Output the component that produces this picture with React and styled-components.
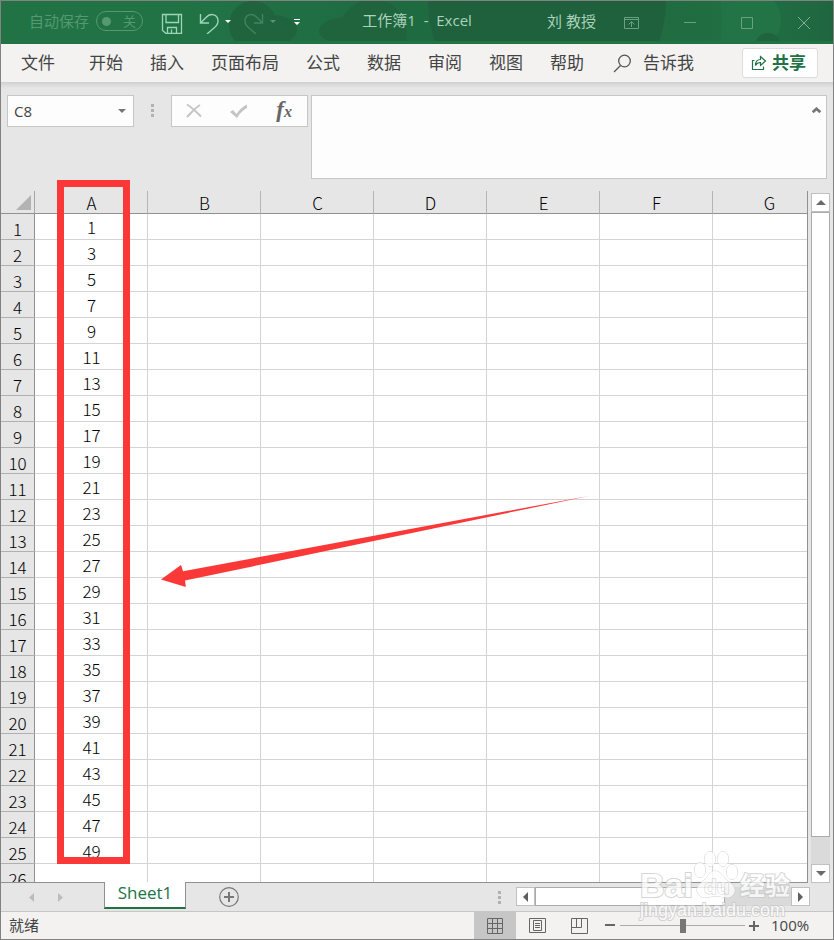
import React, { useState } from 'react';
import styled, { createGlobalStyle } from 'styled-components';

const columns = ['A', 'B', 'C', 'D', 'E', 'F', 'G'];
const rows = Array.from({ length: 26 }, (_, i) => i + 1);
const menuItems = ['文件', '开始', '插入', '页面布局', '公式', '数据', '审阅', '视图', '帮助'];

/* odd numbers fill A1:A25, everything else is empty */
function cellValue(column, row) {
  return column === 'A' && row <= 25 ? row * 2 - 1 : '';
}

function TitleBar() {
  const [autoSave, setAutoSave] = useState(false);

  return (
    <Title>
      <TitleArt viewBox="0 0 832 40" preserveAspectRatio="xMaxYMin slice" aria-hidden="true">
        <defs>
          <linearGradient id="fade" x1="0" x2="1">
            <stop offset="0" stopColor="#1f6a41" stopOpacity="0" />
            <stop offset="0.4" stopColor="#1f6b41" />
            <stop offset="0.8" stopColor="#20693f" />
            <stop offset="1" stopColor="#20693f" stopOpacity="0.5" />
          </linearGradient>
          <linearGradient id="fadeRight" x1="0" x2="1">
            <stop offset="0" stopColor="#1f663f" stopOpacity="0" />
            <stop offset="1" stopColor="#1f663f" />
          </linearGradient>
        </defs>
        <rect x="190" width="530" height="40" fill="url(#fade)" />
        <circle cx="252" cy="24" r="24" fill="#1f643d" />
        <ellipse cx="272" cy="29" rx="24" ry="15" fill="#1f643d" />
        <circle cx="372" cy="32" r="34" fill="#1f643d" />
        <ellipse cx="348" cy="30" rx="30" ry="14" fill="#1f643d" />
        <circle cx="546" cy="0" r="119" fill="#1f613c" />
        <rect x="720" width="112" height="40" fill="url(#fadeRight)" />
        <circle cx="751" cy="19" r="29" fill="#227447" />
        <circle cx="767" cy="45" r="13" fill="#1f643d" />
      </TitleArt>
      <AutoSave>
        自动保存
        <Toggle
          type="button"
          role="switch"
          aria-label="自动保存"
          aria-checked={autoSave}
          onClick={() => setAutoSave(!autoSave)}
        >
          <Knob />
          关
        </Toggle>
      </AutoSave>
      <QuickAccess>
        <IconButton type="button" aria-label="保存">
          <svg width="26" height="22" viewBox="0 0 26 22" fill="none" stroke="#9fd5b7" strokeWidth="1.3">
            <path d="M1.500 2.500h19v19H5l-3.500-3zM5 2.500v8h12.500v-8M6.500 21.500v-6h9v6M10.500 17.500v4" />
          </svg>
        </IconButton>
        <IconButton type="button" aria-label="撤消">
          <svg width="33" height="22" viewBox="0 0 33 22" fill="none" stroke="#9fd5b7" strokeWidth="1.4">
            <path d="M1.500 2v9H10M2 10.500l5-5C12 0 19 3 19 9c0 3-1.500 5-4 7l-7 6" />
            <path d="M26 8h6l-3 3z" fill="#fff" stroke="none" />
          </svg>
        </IconButton>
        <IconButton type="button" aria-label="恢复" disabled>
          <svg width="33" height="22" viewBox="0 0 33 22" fill="none" stroke="#43835f" strokeWidth="1.4">
            <path d="M18.500 2v9H10M18 10.500l-5-5C8 0 1 3 1 9c0 3 1.500 5 4 7l7 6" />
            <path d="M26 8h6l-3 3z" fill="#5b9274" stroke="none" />
          </svg>
        </IconButton>
        <IconButton type="button" aria-label="自定义快速访问工具栏">
          <svg width="12" height="10" viewBox="-6 0 12 10" fill="#fff">
            <path d="M-1 1h6v1h-6zM-1 4h6L2 7z" />
          </svg>
        </IconButton>
      </QuickAccess>
      <Caption>工作簿1&nbsp; -&nbsp; Excel</Caption>
      <User>刘 教授</User>
      <WindowButtons>
        <IconButton type="button" aria-label="功能区显示选项">
          <svg width="15" height="12" viewBox="0 0 15 12" fill="none" stroke="#69a183">
            <path d="M.5.5h14v11H.5zM.5 2.500h14M7.500 10V5M4.500 7.500l3-3 3 3" />
          </svg>
        </IconButton>
        <IconButton type="button" aria-label="最小化">
          <svg width="12" height="12" viewBox="0 0 12 12" stroke="#69a183">
            <path d="M0 5.500h12" />
          </svg>
        </IconButton>
        <IconButton type="button" aria-label="最大化">
          <svg width="12" height="12" viewBox="0 0 12 12" fill="none" stroke="#69a183">
            <path d="M.5.5h11v11H.5z" />
          </svg>
        </IconButton>
        <IconButton type="button" aria-label="关闭">
          <svg width="12" height="12" viewBox="0 0 12 12" stroke="#7db094">
            <path d="M0 0l12 12M12 0L0 12" />
          </svg>
        </IconButton>
      </WindowButtons>
    </Title>
  );
}

function Menu() {
  return (
    <MenuBar>
      {menuItems.map((item) => (
        <MenuItem key={item} type="button">
          {item}
        </MenuItem>
      ))}
      <TellMe type="button">
        <svg width="19" height="20" viewBox="0 0 19 20" fill="none" stroke="#555" strokeWidth="1.3">
          <circle cx="11.500" cy="8" r="5.800" />
          <path d="M7.500 12.500L1 19" />
        </svg>
        告诉我
      </TellMe>
      <Share type="button">
        <svg width="16" height="16" viewBox="0 0 16 16" fill="none" stroke="#217346" strokeWidth="1.2">
          <path d="M3.500 5.500h-2v9h11v-3M4.500 10.500c0-4 2-6 5-6V1.500l5 4.500-5 4.500v-3c-2 0-4 1-5 3z" />
        </svg>
        共享
      </Share>
    </MenuBar>
  );
}

function FormulaBar() {
  return (
    <Formula>
      <NameBox>
        <NameInput aria-label="名称框" defaultValue="C8" />
        <IconButton type="button" aria-label="打开名称框">
          <svg width="8" height="4" viewBox="0 0 8 4" fill="#777">
            <path d="M0 0h8L4 4z" />
          </svg>
        </IconButton>
      </NameBox>
      <Grip />
      <FormulaTools>
        <IconButton type="button" aria-label="取消">
          <svg width="16" height="16" viewBox="0 0 16 16" fill="none" stroke="#c4c4c4" strokeWidth="2">
            <path d="M1 1.500c5 3 9 7 14 12M14 2C9 5 6 9 1 14" />
          </svg>
        </IconButton>
        <IconButton type="button" aria-label="输入">
          <svg width="18" height="15" viewBox="0 0 18 15" fill="#c4c4c4">
            <path d="M0 8l3-2 3.500 4C9 6 12 3 17 .5V4c-4 2-7 5-10 10z" />
          </svg>
        </IconButton>
        <FxButton type="button" aria-label="插入函数">
          f<FxSub>x</FxSub>
        </FxButton>
      </FormulaTools>
      <FormulaField>
        <FormulaInput aria-label="编辑栏" />
        <Collapse type="button" aria-label="折叠编辑栏">
          <svg width="9" height="6" viewBox="0 0 9 6" fill="none" stroke="#777" strokeWidth="2.800">
            <path d="M.7 5.200L4.500 1.800l3.800 3.400" />
          </svg>
        </Collapse>
      </FormulaField>
    </Formula>
  );
}

function Sheet() {
  return (
    <SheetArea>
      <GridView>
        <Grid>
          <colgroup>
            <HeadCol />
            {columns.map((c) => (
              <col key={c} />
            ))}
          </colgroup>
          <thead>
            <tr>
              <Corner>
                <svg width="15" height="15" viewBox="0 0 15 15" fill="#b3b3b3">
                  <path d="M15 0v15H0z" />
                </svg>
              </Corner>
              {columns.map((c) => (
                <ColumnHead key={c} scope="col">
                  {c}
                </ColumnHead>
              ))}
            </tr>
          </thead>
          <tbody>
            {rows.map((r) => (
              <tr key={r}>
                <RowHead scope="row">{r}</RowHead>
                {columns.map((c) => (
                  <Cell key={c}>{cellValue(c, r)}</Cell>
                ))}
              </tr>
            ))}
          </tbody>
        </Grid>
      </GridView>
      <VerticalScroll>
        <ScrollButton type="button" aria-label="向上滚动">
          <svg width="10" height="5" viewBox="0 0 10 5" fill="#6a6a6a">
            <path d="M0 5h10L5 0z" />
          </svg>
        </ScrollButton>
        <VerticalThumb />
        <ScrollButton type="button" aria-label="向下滚动">
          <svg width="10" height="5" viewBox="0 0 10 5" fill="#6a6a6a">
            <path d="M0 0h10L5 5z" />
          </svg>
        </ScrollButton>
      </VerticalScroll>
      <Highlight />
      <Arrow width="430" height="96" viewBox="0 0 430 96" aria-hidden="true">
        <path d="M1 84.500L21 70l2 6.300L430 .7 25 85.500l.8 6.500z" fill="#fb3838" />
      </Arrow>
    </SheetArea>
  );
}

function SheetTabs() {
  return (
    <TabBar>
      <TabNav>
        <IconButton type="button" aria-label="上一个工作表" disabled>
          <svg width="5" height="9" viewBox="0 0 5 9" fill="#bcbcbc">
            <path d="M5 0v9L0 4.500z" />
          </svg>
        </IconButton>
        <IconButton type="button" aria-label="下一个工作表" disabled>
          <svg width="5" height="9" viewBox="0 0 5 9" fill="#bcbcbc">
            <path d="M0 0v9l5-4.500z" />
          </svg>
        </IconButton>
      </TabNav>
      <Tab type="button">Sheet1</Tab>
      <AddSheet type="button" aria-label="新工作表">
        <svg width="20" height="20" viewBox="0 0 20 20" fill="none" stroke="#777">
          <circle cx="10" cy="10" r="9.300" strokeWidth="1.200" />
          <path d="M5 10h10M10 5v10" strokeWidth="2" />
        </svg>
      </AddSheet>
      <TabGrip />
      <HorizontalScroll>
        <ScrollButton type="button" aria-label="向左滚动">
          <svg width="5" height="10" viewBox="0 0 5 10" fill="#5f5f5f">
            <path d="M5 0v10L0 5z" />
          </svg>
        </ScrollButton>
        <HorizontalThumb />
        <ScrollButton type="button" aria-label="向右滚动">
          <svg width="5" height="10" viewBox="0 0 5 10" fill="#5f5f5f">
            <path d="M0 0v10l5-5z" />
          </svg>
        </ScrollButton>
      </HorizontalScroll>
    </TabBar>
  );
}

function StatusBar() {
  const [zoom, setZoom] = useState(100);

  return (
    <Status>
      <StatusText>就绪</StatusText>
      <ViewButtons>
        <ViewButton type="button" aria-label="普通" $active>
          <svg width="16" height="16" viewBox="0 0 16 16" fill="none" stroke="#666">
            <path d="M.5.5h15v15H.5zM5.500.5v15M10.500.5v15M.5 5.500h15M.5 10.500h15" />
          </svg>
        </ViewButton>
        <ViewButton type="button" aria-label="页面布局">
          <svg width="17" height="15" viewBox="0 0 17 15" fill="none" stroke="#666">
            <path d="M.5.5h16v14H.5zM4.500 2.500h8v10h-8zM6 5.500h5M6 7.500h5M6 9.500h5" />
          </svg>
        </ViewButton>
        <ViewButton type="button" aria-label="分页预览">
          <svg width="17" height="16" viewBox="0 0 17 16" fill="none" stroke="#666">
            <path d="M.5.5h16v15H.5zM.5 9.500h10v-9M5.500.5v9" />
          </svg>
        </ViewButton>
      </ViewButtons>
      <ZoomButton type="button" aria-label="缩小" onClick={() => setZoom(Math.max(10, zoom - 10))}>
        <svg width="10" height="10" viewBox="0 0 10 10" fill="#666">
          <path d="M0 3h10v2H0z" />
        </svg>
      </ZoomButton>
      <ZoomRange
        type="range"
        aria-label="显示比例"
        min="0"
        max="200"
        value={zoom}
        onChange={(e) => setZoom(Number(e.target.value))}
      />
      <ZoomButton type="button" aria-label="放大" onClick={() => setZoom(Math.min(200, zoom + 10))}>
        <svg width="10" height="10" viewBox="0 0 10 10" fill="#666">
          <path d="M0 4h4V0h2v4h4v2H6v4H4V6H0z" />
        </svg>
      </ZoomButton>
      <ZoomValue>{zoom}%</ZoomValue>
    </Status>
  );
}

function Watermark() {
  return (
    <Mark>
      <MarkRow>
        <MarkName>Bai</MarkName>
        <svg width="46" height="48" viewBox="0 0 46 48" fill="#fff" stroke="#c4c4c4">
          <ellipse cx="7" cy="19" rx="5.500" ry="7.500" />
          <ellipse cx="17" cy="8" rx="5.500" ry="7.500" />
          <ellipse cx="30" cy="8" rx="5.500" ry="7.500" />
          <ellipse cx="39" cy="21" rx="5.500" ry="7.500" />
          <path d="M22 20c-5 0-7 6-12 10-6 5-8 9-4 14 5 5 11 1 17 1s12 4 17-1c4-5 1-10-5-14-5-4-7-10-13-10z" />
          <text x="11" y="43" fontFamily="Liberation Sans, sans-serif" fontSize="21" fontWeight="bold">
            du
          </text>
        </svg>
        <MarkChinese>经验</MarkChinese>
      </MarkRow>
      <MarkUrl>jingyan.baidu.com</MarkUrl>
    </Mark>
  );
}

function App() {
  return (
    <>
      <GlobalStyle />
      <Window>
        <TitleBar />
        <Menu />
        <FormulaBar />
        <Sheet />
        <SheetTabs />
        <StatusBar />
        <Watermark />
      </Window>
    </>
  );
}

const GlobalStyle = createGlobalStyle`
  * {
    box-sizing: border-box;
  }
  body {
    margin: 0;
    font-family: 'Open Sans', 'Noto Sans CJK SC', sans-serif;
    font-size: 15px;
    color: #444;
  }
  button, input, textarea {
    margin: 0;
    padding: 0;
    border: 0;
    border-radius: 0;
    outline: none;
    background: none;
    font: inherit;
    color: inherit;
  }
  svg {
    display: block;
    flex: none;
  }
`;

const Window = styled.div`
  position: relative;
  display: flex;
  flex-direction: column;
  height: 100vh;
  overflow: hidden;
  border: 1px solid #828282;
  background: #e6e6e6;
`;

const IconButton = styled.button`
  display: flex;
  align-items: center;
  justify-content: center;
`;

const Title = styled.header`
  position: relative;
  display: flex;
  align-items: center;
  flex: none;
  height: 43px;
  padding: 0 23px 0 28px;
  background: #217346;
  color: #a9d3bc;
  line-height: 20px;
`;

const TitleArt = styled.svg`
  position: absolute;
  top: 0;
  right: 0;
  width: 100%;
  height: 40px;
`;

const AutoSave = styled.div`
  position: relative;
  display: flex;
  align-items: center;
  gap: 7px;
  padding-bottom: 3px;
  color: #559872;
`;

const Toggle = styled.button`
  display: flex;
  align-items: center;
  justify-content: space-between;
  width: 47px;
  height: 20px;
  padding: 0 6px 0 5px;
  border: 1px solid #559872;
  border-radius: 10px;
  font-size: 13px;
  line-height: 16px;
`;

const Knob = styled.span`
  width: 9px;
  height: 9px;
  border-radius: 50%;
  background: #559872;
`;

const QuickAccess = styled.div`
  position: relative;
  display: flex;
  align-items: center;
  gap: 12px;
  margin-left: 18px;
`;

const Caption = styled.div`
  position: relative;
  flex: 1;
  padding: 0 14px 5px 0;
  text-align: center;
`;

const User = styled.div`
  position: relative;
  padding-bottom: 3px;
`;

const WindowButtons = styled.div`
  position: relative;
  display: flex;
  align-items: center;
  gap: 45px;
  margin-left: 28px;
`;

const MenuBar = styled.nav`
  display: flex;
  align-items: center;
  flex: none;
  gap: 27px;
  height: 38px;
  padding: 0 15px 0 20px;
  background: #f3f2f1;
  font-size: 17px;
  line-height: 24px;
`;

const MenuItem = styled.button`
  white-space: nowrap;
  &:first-child {
    margin-right: 7px;
  }
`;

const TellMe = styled.button`
  display: flex;
  align-items: center;
  gap: 11px;
  margin-left: 2px;
`;

const Share = styled.button`
  display: flex;
  align-items: center;
  justify-content: center;
  gap: 5px;
  width: 76px;
  height: 30px;
  margin-left: auto;
  padding-right: 3px;
  border: 1px solid #dcdcdc;
  border-radius: 3px;
  background: #fff;
  color: #217346;
  font-weight: bold;
`;

const Formula = styled.div`
  display: flex;
  align-items: flex-start;
  flex: none;
  padding: 13px 6px 12px;
  background: linear-gradient(#d0d0d0, #e6e6e6 6px);
`;

const NameBox = styled.div`
  display: flex;
  width: 127px;
  height: 32px;
  padding: 0 7px 0 6px;
  border: 1px solid #c6c6c6;
  background: #fdfdfd;
`;

const NameInput = styled.input`
  flex: 1;
  min-width: 0;
`;

const Grip = styled.span`
  flex: none;
  width: 3px;
  height: 13px;
  margin: 9px 17px 0;
  background: repeating-linear-gradient(#b1b1b1 0 3px, transparent 3px 5px);
`;

const TabGrip = styled(Grip)`
  margin: 0 15px 0 0;
`;

const FormulaTools = styled.div`
  display: flex;
  align-items: center;
  justify-content: space-between;
  width: 137px;
  height: 32px;
  padding: 0 15px 0 14px;
  border: 1px solid #c6c6c6;
  background: #fdfdfd;
`;

const FxButton = styled.button`
  color: #666;
  font: italic bold 23px/24px 'Liberation Serif', serif;
`;

const FxSub = styled.span`
  font-size: 16px;
`;

const FormulaField = styled.div`
  position: relative;
  display: flex;
  flex: 1;
  height: 84px;
  margin-left: 3px;
  border: 1px solid #c6c6c6;
  background: #fdfdfd;
`;

const FormulaInput = styled.textarea`
  flex: 1;
  padding: 4px 24px 4px 6px;
  resize: none;
`;

const Collapse = styled(IconButton)`
  position: absolute;
  top: 11px;
  right: 5px;
`;

const SheetArea = styled.main`
  position: relative;
  display: flex;
  flex: 1;
  min-height: 0;
`;

const GridView = styled.div`
  flex: 1;
  min-width: 0;
  overflow: hidden;
  border-right: 1px solid #919191;
  border-bottom: 1px solid #919191;
  background:
    linear-gradient(#e6e6e6, #e6e6e6) 0 0 / 100% 22px no-repeat,
    #fff;
`;

const Grid = styled.table`
  table-layout: fixed;
  width: 825px;
  min-width: 100%;
  border-collapse: separate;
  border-spacing: 0;
  color: #000;
  font-family: 'Noto Sans CJK SC', sans-serif;
  font-size: 17px;
  font-weight: 300;
  line-height: 22px;
  text-align: center;
`;

const HeadCol = styled.col`
  width: 34px;
`;

const Corner = styled.td`
  height: 23px;
  padding: 0 3px 3px 15px;
  border-bottom: 1px solid #919191;
  border-right: 1px solid #a6a6a6;
  vertical-align: bottom;
  line-height: 0;
`;

const ColumnHead = styled.th`
  height: 23px;
  padding: 2px 0 0 1px;
  border-bottom: 1px solid #919191;
  border-right: 1px solid #b5b5b5;
  font-weight: 300;
  line-height: 20px;
`;

const RowHead = styled.th`
  height: 26px;
  padding: 4px 0 0;
  border-bottom: 1px solid #b0b0b0;
  border-right: 1px solid #919191;
  background: #e6e6e6;
  font-weight: 300;
  line-height: 21px;
`;

const Cell = styled.td`
  height: 26px;
  padding: 1px 0 0 1px;
  border-bottom: 1px solid #d4d4d4;
  border-right: 1px solid #d4d4d4;
`;

const ScrollButton = styled.button`
  display: flex;
  align-items: center;
  justify-content: center;
  flex: none;
  width: 19px;
  height: 19px;
  border: 1px solid #c0c0c0;
  background: #fff;
`;

const VerticalScroll = styled.div`
  display: flex;
  flex-direction: column;
  flex: none;
  margin: 2px 3px 0;
  background: #dadada;
`;

const VerticalThumb = styled.div`
  flex: 1;
  margin-bottom: 27px;
  border: 1px solid #ababab;
  background: #fff;
`;

const Highlight = styled.div`
  position: absolute;
  top: -11px;
  left: 56px;
  width: 73px;
  height: 684px;
  border: 7px solid #fb3838;
  pointer-events: none;
`;

const Arrow = styled.svg`
  position: absolute;
  top: 304px;
  left: 159px;
  pointer-events: none;
`;

const TabBar = styled.div`
  display: flex;
  align-items: center;
  flex: none;
  height: 29px;
  padding-right: 23px;
  border-bottom: 1px solid #c6c6c6;
`;

const TabNav = styled.div`
  display: flex;
  gap: 24px;
  width: 103px;
  padding-left: 28px;
`;

const Tab = styled.button`
  position: relative;
  align-self: flex-start;
  width: 82px;
  height: 27px;
  margin-top: -1px;
  padding-bottom: 3px;
  border: 1px solid #919191;
  border-top: 0;
  border-bottom: 2px solid #217346;
  background: #fff;
  color: #217346;
  font-size: 17px;
  line-height: 22px;
`;

const AddSheet = styled(IconButton)`
  margin: 0 auto 0 33px;
`;

const HorizontalScroll = styled.div`
  display: flex;
  width: 294px;
  margin-top: -1px;
  background: #dadada;
`;

const HorizontalThumb = styled.div`
  flex: 1;
  margin-right: 66px;
  border: 1px solid #ababab;
  background: #fff;
`;

const Status = styled.footer`
  display: flex;
  align-items: center;
  flex: none;
  height: 27px;
  padding: 0 20px 0 8px;
  background: #f3f2f1;
`;

const StatusText = styled.span`
  margin-right: auto;
  padding-bottom: 1px;
  line-height: 20px;
`;

const ViewButtons = styled.div`
  display: flex;
  margin-right: 5px;
`;

const ViewButton = styled(IconButton)`
  width: 42px;
  height: 27px;
  background: ${(props) => (props.$active ? '#c6c6c6' : 'transparent')};
`;

const ZoomButton = styled(IconButton)`
  width: 10px;
  height: 20px;
`;

const ZoomRange = styled.input`
  appearance: none;
  width: 125px;
  height: 16px;
  margin: 0 4px 0 5px;
  background: linear-gradient(#ababab, #ababab) center / 100% 1px no-repeat;
  &::-webkit-slider-thumb {
    appearance: none;
    width: 6px;
    height: 14px;
    background: #777;
  }
`;

const ZoomValue = styled.span`
  width: 42px;
  margin-left: 12px;
  padding-bottom: 1px;
  line-height: 20px;
`;

const Mark = styled.div`
  position: absolute;
  right: 37px;
  bottom: 18px;
  width: 156px;
  color: #fff;
  opacity: 0.75;
  pointer-events: none;
  paint-order: stroke fill;
  -webkit-text-stroke: 2px #c8c8c8;
`;

const MarkRow = styled.div`
  display: flex;
  align-items: flex-end;
`;

const MarkName = styled.span`
  font: bold 34px/28px 'Liberation Sans', sans-serif;
`;

const MarkChinese = styled.span`
  margin-left: 1px;
  font: bold 25px/30px 'Noto Sans CJK SC', sans-serif;
`;

const MarkUrl = styled.div`
  font: 18px/22px 'Liberation Sans', sans-serif;
`;

export default App;
